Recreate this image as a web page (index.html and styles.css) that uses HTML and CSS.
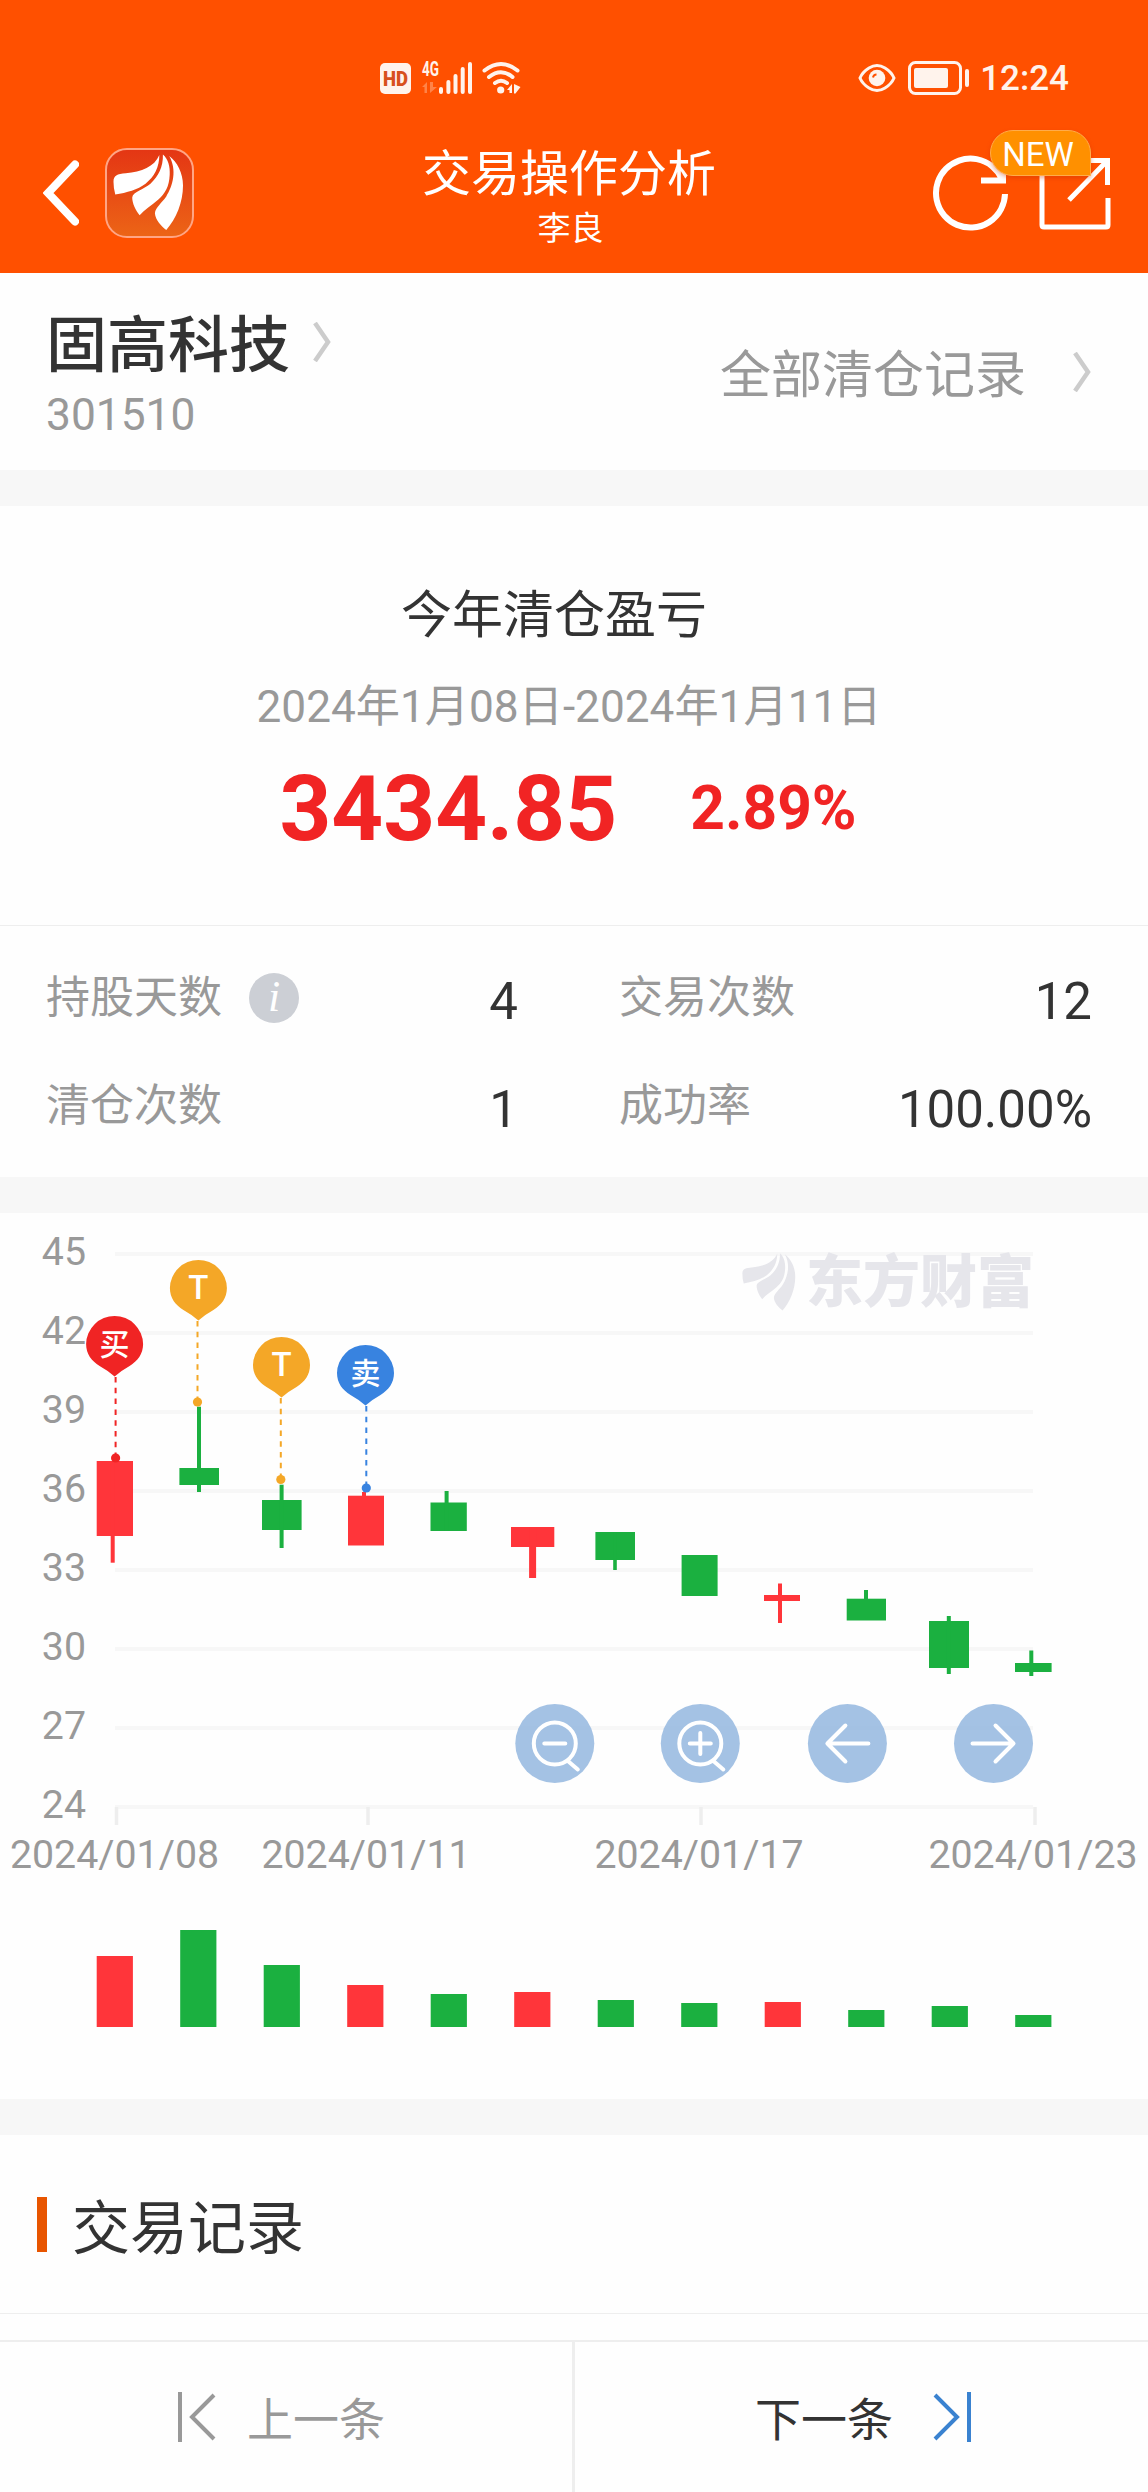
FILE: index.html
```
<!DOCTYPE html>
<html lang="zh-CN">
<head>
<meta charset="UTF-8">
<title>交易操作分析</title>
<link rel="stylesheet" href="styles.css">
</head>

<body>

<svg class="defs">
    <symbol id="mark" viewBox="8 5 72 78">
        <path d="M55 6C50 18 37 23 21 24.5C12 25 8.5 27 8.5 33Q8.500 40 10.300 46C22 44 33 41 41 35C50 28 55 18 55 6Z"/>
        <path d="M58.600 5.500C64 10 66 18 65.500 26C65 38 61 45 54 51C47 57 40 61 35 67C31 62 27.500 55 27.500 49C28 43 39 41 46 35C54 28 59 18 58.600 5.500Z"/>
        <path d="M65 7C73 13 79 24 79 37C79 54 72 71 62 82C57 78 51 72 50.500 65C51 59 58 54 62 48C69 37 73 21 65 7Z"/>
    </symbol>
</svg>

<!-- 顶部 -->
<header class="header">
    <div class="status">
        <svg class="status-left" width="142" height="54" viewBox="380 51 142 54">
            <rect x="380" y="63" width="31" height="31" rx="5" fill="#fff3ec"/>
            <text class="hd" x="395.500" y="85.500" textLength="25" lengthAdjust="spacingAndGlyphs">HD</text>
            <text class="net" x="422" y="76" textLength="17" lengthAdjust="spacingAndGlyphs">4G</text>
            <path d="M422 87l5-5v11h-2.500v-6zM430 82v11l7-6h-4v-5z" fill="#ff8348"/>
            <path class="bars" d="M441 89v3M448.400 82v10M455.500 76v16M462.700 69v23M470 64v28"/>
            <path class="wifi" d="M484.500 70.500Q501 57.500 517.500 70.500M489 77Q501 67.500 512.500 77M495 83Q501 78.500 507 83"/>
            <circle cx="500.700" cy="90" r="3.600" fill="#fff3ec"/>
            <path d="M507 90l5-6v9h-2.500v-3zM514 84l6.500 3-5 6.500h-1.500z" fill="#fff3ec"/>
        </svg>
        <div class="status-right">
            <svg width="38" height="30" viewBox="0 0 38 30">
                <path d="M2 15Q4.500 9 11 5Q19 0 27 5Q33.500 9 36 15Q33.500 21 27 25Q19 30 11 25Q4.500 21 2 15Z" fill="none" stroke="#fff3ec" stroke-width="3"/>
                <circle cx="19" cy="15" r="8.300" fill="#fff3ec"/>
                <path d="M15 14.500Q15.500 11.500 18.500 11.500" fill="none" stroke="#ff5000" stroke-width="2"/>
            </svg>
            <svg width="62" height="34" viewBox="0 0 62 34">
                <rect x="1.500" y="1.500" width="51" height="31" rx="6" fill="none" stroke="#fff3ec" stroke-width="3"/>
                <rect x="6" y="7" width="34" height="20" rx="2" fill="#fff3ec"/>
                <rect x="57" y="8" width="4" height="18" rx="2" fill="#fff3ec"/>
            </svg>
            <span class="clock">12:24</span>
        </div>
    </div>
    <div class="nav">
        <div class="nav-left">
            <svg width="36" height="66" viewBox="0 0 36 66">
                <path d="M32 4.500L5 33L32 61.500" fill="none" stroke="#fff" stroke-width="8" stroke-linecap="round"/>
            </svg>
            <div class="logo"><svg width="71" height="77"><use href="#mark"/></svg></div>
        </div>
        <div class="nav-title">
            <h1>交易操作分析</h1>
            <p>李良</p>
        </div>
        <div class="nav-right">
            <svg width="76" height="76" viewBox="0 0 76 76">
                <path d="M72 39A34.500 34.500 0 1 1 69 24M48 25.500H70V17" fill="none" stroke="#fff" stroke-width="6"/>
            </svg>
            <svg width="72" height="74" viewBox="0 0 72 74">
                <path d="M3 4V69Q3 71 5 71H67Q69 71 69 69V42M42 4.500H68.500V29M67 6L30 44" fill="none" stroke="#fff" stroke-width="5"/>
            </svg>
            <span class="badge">NEW</span>
        </div>
    </div>
</header>

<!-- 股票 -->
<section class="stock">
    <div>
        <div class="stock-name">固高科技
            <svg class="chevron" width="18" height="40" viewBox="0 0 18 40"><path d="M2 1L15 20L2 39"/></svg>
        </div>
        <div class="stock-code">301510</div>
    </div>
    <div class="stock-link">
        <span>全部清仓记录</span>
        <svg class="chevron" width="18" height="40" viewBox="0 0 18 40"><path d="M2 1L15 20L2 39"/></svg>
    </div>
</section>

<!-- 盈亏 -->
<section class="profit">
    <h2>今年清仓盈亏</h2>
    <p class="period">2024年1月08日-2024年1月11日</p>
    <div class="result">
        <b class="amount">3434.85</b>
        <b class="percent">2.89%</b>
    </div>
</section>

<section class="stats">
    <div class="stat">
        <span class="label">持股天数</span>
        <i class="info">i</i>
        <span class="value">4</span>
    </div>
    <div class="stat"><span class="label">交易次数</span><span class="value">12</span></div>
    <div class="stat"><span class="label">清仓次数</span><span class="value">1</span></div>
    <div class="stat"><span class="label">成功率</span><span class="value">100.00%</span></div>
</section>

<!-- K线图 -->
<section class="chart">
    <svg id="chart" width="1148" height="886" viewBox="0 0 1148 886"></svg>
</section>

<!-- 交易记录 -->
<section class="records">
    <h2>交易记录</h2>
</section>

<footer class="pager">
    <div class="prev">
        <svg width="38" height="50" viewBox="0 0 38 50"><path d="M2 0V50M36 3L14 25L36 47"/></svg>
        <span>上一条</span>
    </div>
    <div class="next">
        <span>下一条</span>
        <svg width="38" height="50" viewBox="0 0 38 50"><path d="M36 0V50M2 3L24 25L2 47"/></svg>
    </div>
</footer>

<script>
const UP = "#ff353a";
const DOWN = "#1bb040";

// x, 宽, 实体上, 实体下, 影线x, 影线宽, 最高, 最低, 颜色
const candles = [
    [96.7, 36.3, 248, 323, 112.7, 4, 248, 349.7, UP],
    [179.4, 39.6, 255, 272, 199, 4, 193.7, 279, DOWN],
    [262, 39.6, 287, 317, 281.6, 4, 271.7, 335, DOWN],
    [348, 36, 282.7, 332.5, 364, 4, 279, 332, UP],
    [430.5, 36.3, 289.5, 318, 446.6, 4, 278, 318, DOWN],
    [511, 43.3, 314, 334, 532.6, 7, 314, 365, UP],
    [595.4, 39.6, 319, 347, 615, 3.6, 319, 357, DOWN],
    [681.6, 36, 342, 383, 699, 4, 342, 383, DOWN],
    [764, 36, 382, 388, 780, 4, 370.5, 410, UP],
    [846.7, 39.3, 385.7, 407.5, 866, 4, 377, 407, DOWN],
    [929, 40, 408, 455, 948.8, 4, 403, 461, DOWN],
    [1015, 36.6, 450, 459, 1031.3, 4, 437.5, 463, DOWN]
];
const volumes = [71, 97, 62, 42, 33, 35, 27, 24, 25, 17, 21, 12];

// 中心x, 顶部, 圆点x, 圆点y, 文字, 颜色
const pins = [
    [114.6, 103, 115.6, 245, "买", "#f02424"],
    [198.4, 47, 197.5, 189, "T", "#f4a727"],
    [281.5, 124, 280.8, 266.5, "T", "#f4a727"],
    [365.5, 132, 366.3, 275, "卖", "#3883e0"]
];
const dates = [[116.5, "2024/01/08"], [368, "2024/01/11"], [701, "2024/01/17"], [1035, "2024/01/23"]];

const zoomIcon = "M-21 0a21 21 0 1 0 42 0a21 21 0 1 0 -42 0M12.500 17L23 26M-10.500 0H10.500";
const buttons = [
    [554.8, zoomIcon],
    [700.3, zoomIcon + "M0 -10.500V10.500"],
    [847.4, "M21 0H-20M-2 -18L-20 0L-2 18"],
    [993.5, "M-21 0H20M2 -18L20 0L2 18"]
];

function render() {
    let s = "";

    for (let i = 0; i < 8; i++) {
        const y = 41 + i * 79;
        s += `<line class="grid" x1="115" x2="1033" y1="${y}" y2="${y}"/>`;
        s += `<text class="axis" x="86" y="${y + 11}" text-anchor="end">${45 - i * 3}</text>`;
    }
    dates.forEach(([x, text]) => {
        s += `<line class="tick" x1="${x}" x2="${x}" y1="594" y2="612"/>`;
        s += `<text class="axis" x="${x - 2}" y="655" text-anchor="middle">${text}</text>`;
    });

    // 水印
    s += `<svg x="742" y="39" width="54" height="60" fill="#e6e6eb" preserveAspectRatio="none"><use href="#mark"/></svg>`;
    s += `<text class="watermark" x="806" y="89">东方财富</text>`;

    candles.forEach(([x, w, top, bottom, wx, ww, high, low, color]) => {
        s += `<rect x="${x}" y="${top}" width="${w}" height="${bottom - top}" fill="${color}"/>`;
        s += `<rect x="${wx - ww / 2}" y="${high}" width="${ww}" height="${low - high}" fill="${color}"/>`;
    });
    volumes.forEach((h, i) => {
        s += `<rect x="${96.7 + i * 83.5}" y="${814 - h}" width="36.200" height="${h}" fill="${candles[i][8]}"/>`;
    });

    pins.forEach(([x, y, dx, dy, text, color]) => {
        s += `<line class="dash" x1="${dx}" x2="${dx}" y1="${y + 61}" y2="${dy}" stroke="${color}"/>`;
        s += `<circle cx="${dx}" cy="${dy}" r="4.600" fill="${color}"/>`;
        s += `<path transform="translate(${x} ${y})" fill="${color}" d="M0 0A28.500 28.500 0 0 1 28.500 28C28.500 38 23 45 15 50Q6 55 0 60.500Q-6 55 -15 50C-23 45 -28.500 38 -28.500 28A28.500 28.500 0 0 1 0 0Z"/>`;
        s += `<text class="pin" x="${x}" y="${y + 39}" font-size="${text === "T" ? 33 : 30}">${text}</text>`;
    });

    buttons.forEach(([x, d]) => {
        s += `<g transform="translate(${x} 530.500)"><circle r="39.500" fill="#96b9e0" fill-opacity="0.870"/><path class="icon" d="${d}"/></g>`;
    });

    document.getElementById("chart").innerHTML = s;
}
render();
</script>

</body>
</html>
```

FILE: styles.css
```
* { box-sizing: border-box; }
body {
    margin: 0;
    background: #fefefe;
    color: #333;
    font-family: Roboto, "Noto Sans CJK SC", sans-serif;
}
h1, h2, p { margin: 0; font-weight: normal; }
svg { display: block; flex: none; }
.defs { width: 0; height: 0; position: absolute; }

/* 顶部 */
.header {
    height: 273px;
    background: #ff5000;
    color: #fff;
}
.status {
    height: 112px;
    padding: 44px 79px 0 380px;
    display: flex;
    justify-content: space-between;
    align-items: center;
}
.status-right {
    display: flex;
    align-items: center;
    gap: 12px;
}
.clock {
    margin-left: -2px;
    padding-top: 2px;
    color: #fff3ec;
    font-size: 35px;
    font-weight: 500;
    line-height: 40px;
}
.hd {
    font-size: 20px;
    font-weight: 900;
    fill: #d8501c;
    text-anchor: middle;
}
.net {
    font-size: 20px;
    font-weight: 700;
    fill: #fff3ec;
}
.bars { stroke: #fff3ec; stroke-width: 4; stroke-linecap: round; }
.wifi { fill: none; stroke: #fff3ec; stroke-width: 4; stroke-linecap: round; }

.nav {
    height: 161px;
    display: grid;
    grid-template-columns: 378px 382px 388px;
}
.nav-left {
    display: flex;
    align-items: center;
    gap: 26px;
    padding-left: 43px;
}
.logo {
    width: 89px;
    height: 90px;
    border: 2px solid #ffa585;
    border-radius: 22px;
    background: linear-gradient(#e43614, #ec6416);
    padding: 4px 0 0 6px;
    fill: #fff;
}
.nav-title { padding-top: 35px; text-align: center; }
.nav-title h1 { font-size: 49px; line-height: 56px; }
.nav-title p { font-size: 33px; line-height: 44px; margin-top: 4px; padding-left: 3px; }
.nav-right {
    position: relative;
    display: flex;
    align-items: center;
    justify-content: flex-end;
    gap: 30px;
    padding-right: 37px;
}
.badge {
    position: absolute;
    right: 57px;
    top: 18px;
    width: 101px;
    height: 46px;
    border: 1px solid #ffac4a;
    border-radius: 23px 23px 0 23px;
    background: #ff9000;
    box-shadow: 0 2px 4px rgba(200, 50, 0, .4);
    font-size: 33px;
    line-height: 47px;
    text-align: center;
    padding-right: 5px;
}

/* 股票 */
.stock {
    height: 197px;
    padding: 38px 57px 0 46px;
    display: flex;
    justify-content: space-between;
}
.stock-name {
    display: flex;
    gap: 23px;
    font-size: 61px;
    font-weight: 500;
    line-height: 70px;
}
.chevron { fill: none; stroke: #ccc; stroke-width: 4.5; }
.stock-name .chevron { margin-top: 11px; }
.stock-code {
    margin-top: 4px;
    font-size: 44.3px;
    line-height: 60px;
    color: #999;
}
.stock-link {
    display: flex;
    align-items: center;
    gap: 47px;
    height: 121px;
    font-size: 51px;
    color: #999;
}
.stock-link span { line-height: 60px; padding-top: 8px; }

/* 盈亏 */
.profit {
    height: 455px;
    border-top: 36px solid #f7f7f7;
    padding: 80px 12px 0 0;
    text-align: center;
}
.profit h2 { font-size: 51px; line-height: 60px; padding-right: 28px; }
.period {
    margin-top: 31px;
    padding-left: 2px;
    font-size: 44.2px;
    line-height: 60px;
    color: #999;
}
.result {
    margin-top: 22px;
    display: flex;
    justify-content: center;
    align-items: center;
    gap: 73px;
    line-height: 100px;
    color: #f12424;
}
.amount { font-size: 90.5px; }
.percent { font-size: 60.5px; }

/* 统计 */
.stats {
    height: 252px;
    border-top: 1px solid #eee;
    padding: 20px 56px 15px 46px;
    display: grid;
    grid-template-columns: 472px 473px;
    grid-auto-rows: 108px;
    column-gap: 101px;
}
.stat { display: flex; align-items: center; }
.label { font-size: 44px; line-height: 60px; padding-bottom: 5px; color: #999; }
.value { font-size: 51px; line-height: 60px; margin-left: auto; padding-top: 3px; }
.info {
    width: 50px;
    height: 50px;
    margin: 0 0 4px 27px;
    border-radius: 50%;
    background: #cccfd5;
    color: #fff;
    font: italic 44px/47px "Liberation Serif", serif;
    text-align: center;
}

/* K线图 */
.chart {
    border-top: 36px solid #f7f7f7;
    border-bottom: 36px solid #f7f7f7;
}
.grid { stroke: #f7f7f7; stroke-width: 4; }
.tick { stroke: #eee; stroke-width: 3.5; }
.axis { font-size: 39.3px; fill: #999; }
.watermark { font-size: 57px; font-weight: 900; fill: #e6e6eb; }
.dash { stroke-width: 2; stroke-dasharray: 5.5 5.3; }
.pin { fill: #fff; font-weight: 500; text-anchor: middle; }
.icon { fill: none; stroke: #fff; stroke-width: 4; stroke-linecap: round; stroke-linejoin: round; }

/* 交易记录 */
.records {
    height: 179px;
    border-bottom: 1px solid #eee;
    display: flex;
    align-items: center;
    padding-left: 37px;
}
.records::before {
    content: "";
    width: 10px;
    height: 55px;
    background: #e85500;
}
.records h2 { font-size: 58px; line-height: 70px; padding: 10px 0 0 25px; }

.pager {
    margin-top: 26px;
    height: 152px;
    border-top: 2px solid #eee;
    display: grid;
    grid-template-columns: 575px 573px;
    font-size: 46px;
}
.pager div { display: flex; align-items: center; }
.pager span { line-height: 60px; padding-top: 6px; }
.pager path { fill: none; stroke-width: 4; stroke: #999; }
.prev {
    border-right: 3px solid #eee;
    padding-left: 178px;
    gap: 31px;
    color: #999;
}
.next { padding-left: 180px; gap: 40px; }
.pager .next path { stroke: #3a82d0; }
```
